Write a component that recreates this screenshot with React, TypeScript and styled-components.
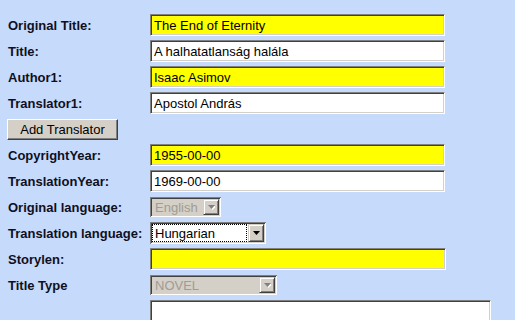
import React from "react";
import styled, { createGlobalStyle } from "styled-components";

const Global = createGlobalStyle`
  html, body { margin: 0; padding: 0; background: #c6dafc; }
  body { padding: 8px; font-family: "Liberation Sans", Arial, sans-serif; }
`;

const Form = styled.div`
  display: grid;
  grid-template-columns: 142px auto;
  grid-auto-rows: 22px;
  row-gap: 4px;
  align-items: center;
  justify-items: start;
  padding-top: 6px;
`;

const Label = styled.div`
  font: bold 13px "Liberation Sans", Arial, sans-serif;
  color: #10101c;
  white-space: nowrap;
`;

const sunken = `
  border-style: solid;
  border-width: 1px;
  border-color: #808080 #ffffff #ffffff #808080;
  box-shadow: inset 1px 1px 0 #404040, inset -1px -1px 0 #d4d0c8;
`;

const TextField = styled.input<{ $yellow?: boolean; $w: number }>`
  box-sizing: border-box;
  width: ${(p) => p.$w}px;
  height: 22px;
  margin: 0;
  padding: 1px 3px 0 3px;
  ${sunken}
  background: ${(p) => (p.$yellow ? "#ffff00" : "#ffffff")};
  font: 13px "Liberation Sans", Arial, sans-serif;
  color: #000;
  outline: none;
`;

const Area = styled.div`
  box-sizing: border-box;
  width: 341px;
  height: 60px;
  align-self: start;
  ${sunken}
  background: #fff;
`;

const Button = styled.button`
  grid-column: 1 / span 2;
  box-sizing: border-box;
  width: 111px;
  height: 21px;
  margin: 0 0 0 -1px;
  padding: 0;
  background: #d4d0c8;
  border-style: solid;
  border-width: 1px;
  border-color: #ffffff #404040 #404040 #ffffff;
  box-shadow: inset -1px -1px 0 #808080;
  font: 13px "Liberation Sans", Arial, sans-serif;
  color: #000;
`;

const SelectBox = styled.div<{ $w: number; $disabled?: boolean }>`
  box-sizing: border-box;
  width: ${(p) => p.$w}px;
  height: ${(p) => (p.$disabled ? 20 : 22)}px;
  display: flex;
  align-items: stretch;
  padding: 2px;
  ${sunken}
  border-width: 0;
  box-shadow: inset 1px 1px 0 #808080, inset -1px -1px 0 #ffffff,
    inset 2px 2px 0 #404040, inset -2px -2px 0 #d4d0c8;
  background: ${(p) => (p.$disabled ? "#d4d0c8" : "#ffffff")};
  font: 13px "Liberation Sans", Arial, sans-serif;
  color: ${(p) => (p.$disabled ? "#a09c94" : "#000")};
`;

const SelectText = styled.div<{ $focus?: boolean }>`
  flex: 1;
  display: flex;
  align-items: center;
  padding-left: 2px;
  margin-right: 1px;
  border: 1px ${(p) => (p.$focus ? "dotted #000" : "solid transparent")};
  line-height: 1;
`;

const Arrow = styled.div`
  box-sizing: border-box;
  width: 16px;
  background: #d4d0c8;
  border-style: solid;
  border-width: 1px;
  border-color: #d4d0c8 #404040 #404040 #d4d0c8;
  box-shadow: inset 1px 1px 0 #ffffff, inset -1px -1px 0 #808080;
  display: flex;
  align-items: center;
  justify-content: center;
`;

function Select({ w, text, disabled, focus }: { w: number; text: string; disabled?: boolean; focus?: boolean }) {
  return (
    <SelectBox $w={w} $disabled={disabled}>
      <SelectText $focus={focus}>{text}</SelectText>
      <Arrow>
        <svg width="7" height="5" viewBox="0 0 7 5">
          {disabled && <path d="M1 1h7L4.5 5z" fill="#ffffff" />}
          <path d="M0 0h7L3.5 4z" fill={disabled ? "#808080" : "#000"} />
        </svg>
      </Arrow>
    </SelectBox>
  );
}

export default function App() {
  return (
    <>
      <Global />
      <Form>
        <Label>Original Title:</Label>
        <TextField $w={295} $yellow readOnly value="The End of Eternity" />
        <Label>Title:</Label>
        <TextField $w={295} readOnly value="A halhatatlanság halála" />
        <Label>Author1:</Label>
        <TextField $w={295} $yellow readOnly value="Isaac Asimov" />
        <Label>Translator1:</Label>
        <TextField $w={295} readOnly value="Apostol András" />
        <Button>Add Translator</Button>
        <Label>CopyrightYear:</Label>
        <TextField $w={295} $yellow readOnly value="1955-00-00" />
        <Label>TranslationYear:</Label>
        <TextField $w={295} readOnly value="1969-00-00" />
        <Label>Original language:</Label>
        <Select w={71} text="English" disabled />
        <Label>Translation language:</Label>
        <Select w={116} text="Hungarian" focus />
        <Label>Storylen:</Label>
        <TextField $w={296} $yellow readOnly value="" />
        <Label>Title Type</Label>
        <Select w={127} text="NOVEL" disabled />
        <Label></Label>
        <Area />
      </Form>
    </>
  );
}
